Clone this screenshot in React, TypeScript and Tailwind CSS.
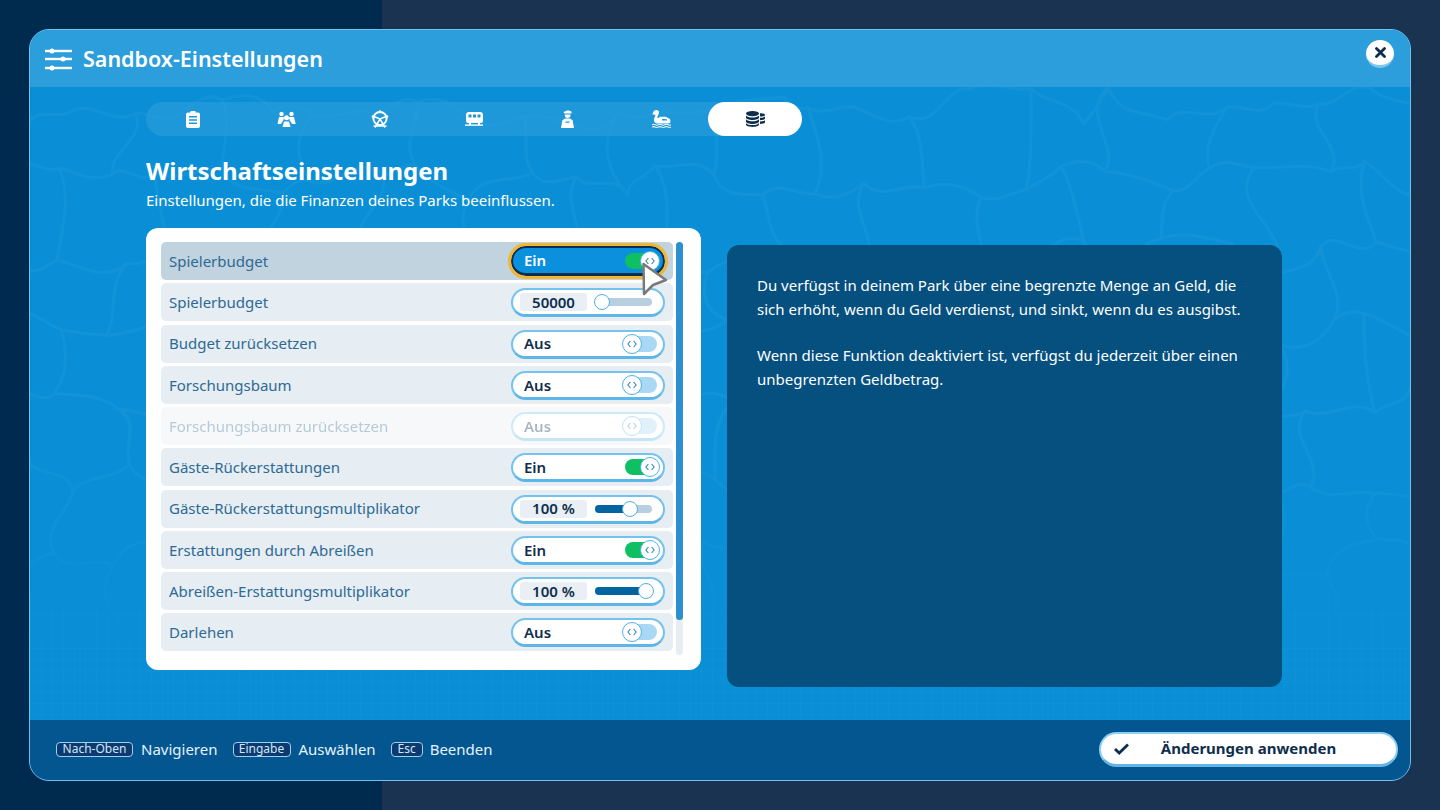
const rows = [
  { label: 'Spielerbudget', kind: 'on', focus: true },
  { label: 'Spielerbudget', kind: 'slider', value: '50000', pct: 0 },
  { label: 'Budget zurücksetzen', kind: 'off' },
  { label: 'Forschungsbaum', kind: 'off' },
  { label: 'Forschungsbaum zurücksetzen', kind: 'off', disabled: true },
  { label: 'Gäste-Rückerstattungen', kind: 'on' },
  { label: 'Gäste-Rückerstattungsmultiplikator', kind: 'slider', value: '100 %', pct: 63 },
  { label: 'Erstattungen durch Abreißen', kind: 'on' },
  { label: 'Abreißen-Erstattungsmultiplikator', kind: 'slider', value: '100 %', pct: 100 },
  { label: 'Darlehen', kind: 'off' },
]

function Knob() {
  return (
    <div className="w-[20px] h-[20px] rounded-full bg-white border border-[#4fb0e6] flex items-center justify-center">
      <svg width="10" height="8" viewBox="0 0 10 8" fill="none" stroke="#2f86bd" strokeWidth="1.1">
        <path d="M3.4 1 L0.9 4 L3.4 7" />
        <path d="M6.6 1 L9.1 4 L6.6 7" />
      </svg>
    </div>
  )
}

function Toggle({ on }: { on: boolean }) {
  return (
    <div className="relative w-[35px] h-[16px] ml-auto mr-[6px]">
      <div className={`absolute rounded-full h-[16px] ${on ? 'bg-[#0fc062] left-[3px] w-[30px]' : 'bg-[#a9d8f5] left-[8px] w-[27px]'}`}></div>
      <div className={`absolute top-[-2px] ${on ? 'left-[18px]' : 'left-0'}`}>
        <Knob />
      </div>
    </div>
  )
}

function Slider({ value, pct }: { value: string; pct: number }) {
  // the knob stops 7px short of each end of the track
  const knobX = 7 + (pct / 100) * 44
  return (
    <div className="flex items-center w-full">
      <div className="w-[67px] h-[18px] ml-[7px] rounded-[3px] bg-[#e9eff4] flex items-center justify-center text-[15px] font-semibold text-[#0f2e4d]">
        {value}
      </div>
      <div className="relative ml-[8px] w-[57px] h-[8px] rounded-full bg-[#b7cfe0]">
        {pct > 0 && <div className="h-full rounded-full bg-[#03659f]" style={{ width: knobX }}></div>}
        <div
          className="absolute top-[-4px] w-[16px] h-[16px] ml-[-8px] rounded-full bg-white border border-[#4fb0e6]"
          style={{ left: knobX }}
        ></div>
      </div>
    </div>
  )
}

function Row({ row }: { row: (typeof rows)[number] }) {
  return (
    <div
      className={`relative h-[38px] shrink-0 rounded-[5px] flex items-center pl-[8px] ${
        row.focus ? 'bg-[#c0d3de]' : 'bg-[#e6edf3]'
      } ${row.disabled ? 'opacity-35' : ''}`}
    >
      <span className="text-[15px] text-[#2d6a93]">{row.label}</span>
      <div
        className={`absolute left-[350px] w-[154px] rounded-full flex items-center ${
          row.focus
            ? 'top-[4px] h-[30px] bg-[#0a90dc] border-2 border-[#0b2f4e] outline-[3px] outline-[#f2b632] border-b-[3px]'
            : 'top-[5px] h-[29px] bg-white border-2 border-[#74c2ee] border-b-[3px] border-b-[#5db5e8]'
        } ${row.kind !== 'slider' ? 'pl-[11px]' : ''}`}
      >
        {row.kind === 'slider' ? (
          <Slider value={row.value as string} pct={row.pct as number} />
        ) : (
          <>
            <span className={`text-[15px] font-semibold ${row.focus ? 'text-white' : 'text-[#0f2e4d]'}`}>
              {row.kind === 'on' ? 'Ein' : 'Aus'}
            </span>
            <Toggle on={row.kind === 'on'} />
          </>
        )}
      </div>
    </div>
  )
}

function Clipboard({ c }: { c: string }) {
  return (
    <svg width="14" height="17" viewBox="0 0 14 17">
      <path fill={c} fillRule="evenodd" d="M4.5 0h5v1.5h2.5A2 2 0 0 1 14 3.5V15a2 2 0 0 1-2 2H2a2 2 0 0 1-2-2V3.5a2 2 0 0 1 2-2h2.5zM3 5v1.6h8V5zm0 3.2v1.6h8V8.2zm0 3.2V13h8v-1.6z" />
    </svg>
  )
}

function Guests({ c }: { c: string }) {
  return (
    <svg width="19" height="16" viewBox="0 0 19 16" fill={c}>
      <circle cx="4.5" cy="3" r="2.2" />
      <circle cx="14.5" cy="3" r="2.2" />
      <circle cx="9.5" cy="6.8" r="2.5" />
      <path d="M2 6h5l-.5 3-2.5 4H0.5zM12 6h5l1.7 7H15l-2.5-4z" />
      <path d="M5.5 16 7 10.5h5L13.5 16z" />
    </svg>
  )
}

function Wheel({ c }: { c: string }) {
  return (
    <svg width="18" height="18" viewBox="0 0 18 18" fill="none" stroke={c} strokeWidth="2">
      <circle cx="9" cy="8.5" r="6.6" />
      <path d="M9 9 4 17.5M9 9l5 8.5M3 6.5 9 9l6-2.5M2.5 16h13" strokeWidth="1.5" />
      <circle cx="9" cy="1.8" r="1.5" fill={c} stroke="none" />
      <circle cx="2.2" cy="6.5" r="1.5" fill={c} stroke="none" />
      <circle cx="15.8" cy="6.5" r="1.5" fill={c} stroke="none" />
    </svg>
  )
}

function Train({ c }: { c: string }) {
  return (
    <svg width="18" height="14" viewBox="0 0 18 14">
      <path fill={c} fillRule="evenodd" d="M4 0h11a3 3 0 0 1 3 3v6a2 2 0 0 1-2 2H3a2 2 0 0 1-2-2V3a3 3 0 0 1 3-3zM3.5 2.5v3h3v-3zm4.5 0v3h3v-3zm4.5 0v3h3v-3z" />
      <rect fill={c} x="0" y="12.4" width="18" height="1.4" />
      <rect fill={c} x="4" y="11" width="2" height="2" />
      <rect fill={c} x="13" y="11" width="2" height="2" />
    </svg>
  )
}

function Staff({ c }: { c: string }) {
  return (
    <svg width="13" height="18" viewBox="0 0 13 18">
      <path fill={c} d="M2.5 2 7 0.2 10.5 1.6V3.6H3.5z" />
      <path fill={c} d="M3.8 4.4h5.6A2.8 2.8 0 0 1 6.6 8 2.8 2.8 0 0 1 3.8 4.4z" />
      <path fill={c} fillRule="evenodd" d="M4 8.6h5l2.6 1.6 1.4 7.8H0l1.4-7.8zM4.5 11.5v1.2h4v-1.2z" />
    </svg>
  )
}

function Duck({ c }: { c: string }) {
  return (
    <svg width="19" height="18" viewBox="0 0 19 18" fill={c}>
      <path fillRule="evenodd" d="M4.2 0a2.8 2.8 0 0 1 2.8 2.8c0 1.6-1.6 3-1.6 4.6 0 .5.4 .8 1 .6L8 6.8h5.5L17 8.6A2.4 2.4 0 0 1 18.4 10.8v.9A1.8 1.8 0 0 1 16.6 13.5H5.5A3.6 3.6 0 0 1 2 9.8c0-2 1.5-3.6 1.5-4.8L0.3 4.3 1.6 1.6A2.8 2.8 0 0 1 4.2 0zM10 9v1.6h5V9.6L13 9z" />
      <path d="M0 14.3q1.6-.9 3.2 0t3.2 0 3.2 0 3.2 0 3.2 0 3 0v1q-1.6.9-3 0t-3.2 0-3.2 0-3.2 0-3.2 0-3.2 0z" />
      <path d="M0 16.5q1.6-.9 3.2 0t3.2 0 3.2 0 3.2 0 3.2 0 3 0v1q-1.6.5-3 0t-3.2 0-3.2 0-3.2 0-3.2 0-3.2 0z" />
    </svg>
  )
}

function Coins({ c }: { c: string }) {
  return (
    <svg width="19" height="16" viewBox="0 0 19 16" fill={c}>
      <ellipse cx="6.5" cy="2.6" rx="6.5" ry="2.6" />
      <path d="M0 4.4c1.2 1.4 3.6 2 6.5 2s5.3-.6 6.5-2v2.2c0 1.4-3 2.5-6.5 2.5S0 8 0 6.6z" />
      <path d="M0 8.2c1.2 1.4 3.6 2 6.5 2s5.3-.6 6.5-2v2.4c0 1.4-3 2.5-6.5 2.5S0 12 0 10.6z" />
      <path d="M0 12.2c1.2 1.4 3.6 1.8 6.5 1.8s5.3-.4 6.5-1.8v1.4C13 15 10 16 6.5 16S0 15 0 13.6z" />
      <path d="M14 2.2c2.8 0 5 .7 5 1.7s-2.2 1.7-5 1.7zM14 6.8c2 0 4-.4 5-1.2v2c0 1-2.2 1.6-5 1.7zM14 10.4c2 0 4-.4 5-1.2v2c0 1-2.2 1.6-5 1.7z" />
    </svg>
  )
}

const tabIcons = [Clipboard, Guests, Wheel, Train, Staff, Duck, Coins]

function Key({ label, width }: { label: string; width: string }) {
  return (
    <span
      className={`${width} h-[15px] rounded-[4px] border-[1.5px] border-[#9fd0ef] bg-[#0d3a70] flex items-center justify-center text-[12px] leading-none text-[#cfe8f8]`}
    >
      {label}
    </span>
  )
}

// caustic lines of the pool floor: a jittered brick lattice with curved edges
function waterPaths() {
  let seed = 17
  const rnd = (n: number) => {
    seed = (seed * 16807) % 2147483647
    return ((seed % 1000) / 1000 - 0.5) * 2 * n
  }
  const pts: [number, number][][] = []
  for (let r = 0; r < 9; r++) {
    const line: [number, number][] = []
    for (let c = 0; c < 30; c++) {
      line.push([c * 50 - 10 + rnd(16), r * 75 - 10 + rnd(20)])
    }
    pts.push(line)
  }
  const edge = (a: [number, number], b: [number, number]) => {
    const dx = b[0] - a[0]
    const dy = b[1] - a[1]
    const k1 = rnd(0.35)
    const k2 = rnd(0.35)
    return `M${a[0]} ${a[1]}C${a[0] + dx / 3 - dy * k1} ${a[1] + dy / 3 + dx * k1} ${a[0] + (dx * 2) / 3 - dy * k2} ${a[1] + (dy * 2) / 3 + dx * k2} ${b[0]} ${b[1]}`
  }
  const d: string[] = []
  for (let r = 0; r < 9; r++) {
    for (let c = 0; c < 30; c++) {
      if (c < 29) d.push(edge(pts[r][c], pts[r][c + 1]))
      if (r < 8 && (r + c) % 2 === 0) d.push(edge(pts[r][c], pts[r + 1][c]))
    }
  }
  return d.join('')
}

const water = waterPaths()

function Water() {
  return (
    <>
      <svg
        className="absolute inset-0 w-full h-full pointer-events-none [mask-image:linear-gradient(to_bottom,black_55%,transparent_90%)]"
        viewBox="0 0 1380 575"
        fill="none"
        stroke="#ffffff"
        strokeOpacity="0.04"
        strokeWidth="3"
        strokeLinecap="round"
      >
        <path d={water} />
      </svg>
      <div className="absolute inset-x-0 bottom-0 h-[160px] pointer-events-none bg-[linear-gradient(#ffffff05_1px,transparent_1px),linear-gradient(90deg,#ffffff05_1px,transparent_1px)] bg-[size:11px_11px] [mask-image:linear-gradient(to_top,black_40%,transparent)]"></div>
    </>
  )
}

export default function App() {
  return (
    <div className="relative w-[1440px] h-[810px] overflow-hidden bg-[#1a3350] p-[29px] font-['Noto_Sans',sans-serif]">
      <div className="absolute left-0 top-0 bottom-0 w-[382px] bg-[#012a4f]"></div>

      <div className="relative w-[1382px] h-[752px] rounded-[20px] border border-[#6fc0ec] overflow-hidden flex flex-col bg-[#0a8fd6]">
        {/* Header */}
        <div className="h-[57px] shrink-0 bg-[#2b9edb] flex items-center pl-[15px] pr-[16px]">
          <svg width="28" height="24" viewBox="0 0 28 24" fill="white">
            <rect x="0" y="2.8" width="27" height="2.4" />
            <circle cx="7" cy="4" r="2.5" />
            <rect x="0" y="10.8" width="27" height="2.4" />
            <circle cx="18" cy="12" r="2.5" />
            <rect x="0" y="19.8" width="27" height="2.4" />
            <circle cx="7" cy="21" r="2.5" />
          </svg>
          <h1 className="ml-[10px] mt-[2px] text-[21.5px] font-semibold text-white">Sandbox-Einstellungen</h1>
          <div className="ml-auto mb-[9px] w-[28px] h-[28px] rounded-full bg-white border-b-[3px] border-[#7cc6ee] flex items-center justify-center">
            <svg width="11" height="11" viewBox="0 0 11 11" stroke="#0f2e4d" strokeWidth="2.8" strokeLinecap="round">
              <path d="M1.5 1.5 9.5 9.5M9.5 1.5 1.5 9.5" />
            </svg>
          </div>
        </div>

        {/* Body */}
        <div className="relative flex-1 pl-[116px] pt-[15px]">
          <Water />
          <div className="relative">
            <div className="w-[656px] h-[34px] rounded-full bg-[#2b9edb]/60 flex">
              {tabIcons.map((Icon, i) => (
                <div
                  key={i}
                  className={`flex-1 rounded-full flex items-center justify-center ${i === 6 ? 'bg-white' : ''}`}
                >
                  <Icon c={i === 6 ? '#0f2e4d' : '#ffffff'} />
                </div>
              ))}
            </div>

            <h2 className="mt-[16px] text-[24px] leading-[37px] font-bold text-white">Wirtschaftseinstellungen</h2>
            <p className="mt-[1px] text-[15px] leading-[21px] text-white">Einstellungen, die die Finanzen deines Parks beeinflussen.</p>

            <div className="mt-[17px] flex items-start gap-[26px]">
              <div className="relative w-[555px] h-[442px] rounded-[12px] bg-white pl-[15px] pr-[28px] pt-[14px]">
                <div className="flex flex-col gap-[3.25px]">
                  {rows.map((r, i) => (
                    <Row key={i} row={r} />
                  ))}
                </div>
                <div className="absolute left-[530px] top-[14px] w-[7px] h-[413px] rounded-full bg-[#e6edf3]">
                  <div className="w-full h-[378px] rounded-full bg-[#2b8fd0]"></div>
                </div>
              </div>

              <div className="mt-[17px] w-[555px] h-[442px] rounded-[12px] bg-[#05507f] px-[30px] pt-[28px] text-[15px] leading-[24px] text-white">
                <p>
                  Du verfügst in deinem Park über eine begrenzte Menge an Geld, die
                  <br />
                  sich erhöht, wenn du Geld verdienst, und sinkt, wenn du es ausgibst.
                </p>
                <p className="mt-[22px]">
                  Wenn diese Funktion deaktiviert ist, verfügst du jederzeit über einen
                  <br />
                  unbegrenzten Geldbetrag.
                </p>
              </div>
            </div>
          </div>
        </div>

        {/* Footer */}
        <div className="h-[60px] shrink-0 bg-[#03568f] flex items-center pl-[26px] pr-[12px] pb-[2px] text-[15px] text-[#e4f3fc]">
          <Key label="Nach-Oben" width="w-[77px]" />
          <span className="ml-[8px]">Navigieren</span>
          <span className="ml-[15px]"><Key label="Eingabe" width="w-[58px]" /></span>
          <span className="ml-[8px]">Auswählen</span>
          <span className="ml-[15px]"><Key label="Esc" width="w-[32px]" /></span>
          <span className="ml-[7px]">Beenden</span>
          <div className="relative ml-auto w-[299px] h-[35px] rounded-full bg-white border-2 border-[#8fd0f2] border-b-[3px] border-b-[#63b5e6] flex items-center justify-center">
            <svg className="absolute left-[13px] top-[9px]" width="15" height="12" viewBox="0 0 15 12" fill="none" stroke="#0f2e4d" strokeWidth="2.8">
              <path d="M1 6 5.2 10 14 1.5" />
            </svg>
            <span className="text-[15px] font-bold text-[#0f2e4d]">Änderungen anwenden</span>
          </div>
        </div>
      </div>

      {/* Cursor */}
      <svg className="absolute left-[641px] top-[262px]" width="28" height="34" viewBox="0 0 28 34">
        <path d="M2.5 2 L25 18 L12 23 L3 32 Z" fill="#ffffff" stroke="#7a7a7a" strokeWidth="2.5" strokeLinejoin="round" />
      </svg>
    </div>
  )
}
